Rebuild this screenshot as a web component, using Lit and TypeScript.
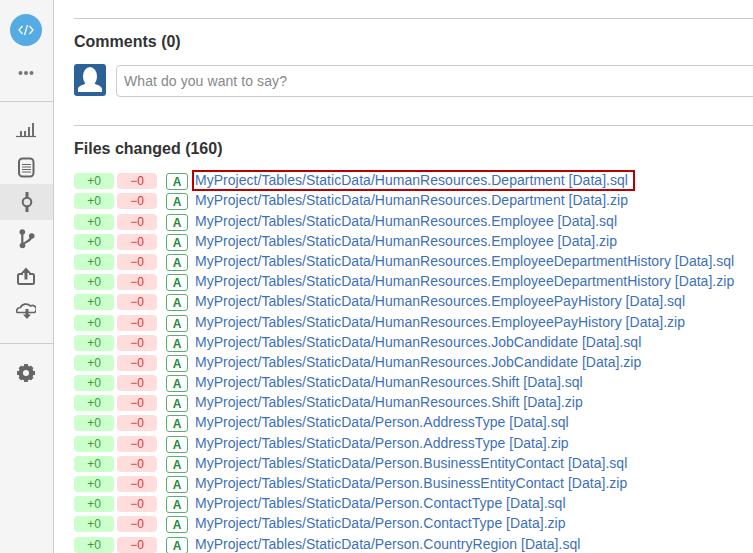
import { LitElement, html, css, svg } from "lit";
import { customElement } from "lit/decorators.js";

const files = [
  "HumanResources.Department [Data].sql",
  "HumanResources.Department [Data].zip",
  "HumanResources.Employee [Data].sql",
  "HumanResources.Employee [Data].zip",
  "HumanResources.EmployeeDepartmentHistory [Data].sql",
  "HumanResources.EmployeeDepartmentHistory [Data].zip",
  "HumanResources.EmployeePayHistory [Data].sql",
  "HumanResources.EmployeePayHistory [Data].zip",
  "HumanResources.JobCandidate [Data].sql",
  "HumanResources.JobCandidate [Data].zip",
  "HumanResources.Shift [Data].sql",
  "HumanResources.Shift [Data].zip",
  "Person.AddressType [Data].sql",
  "Person.AddressType [Data].zip",
  "Person.BusinessEntityContact [Data].sql",
  "Person.BusinessEntityContact [Data].zip",
  "Person.ContactType [Data].sql",
  "Person.ContactType [Data].zip",
  "Person.CountryRegion [Data].sql",
];

const icon = (w: number, h: number, body: unknown) =>
  html`<svg width=${w} height=${h} viewBox="0 0 ${w} ${h}" fill="none">${body}</svg>`;

@customElement("app-root")
export class AppRoot extends LitElement {
  static styles = css`
    :host { display: block; width: 753px; height: 553px; overflow: hidden; background: #fff; font-family: "Liberation Sans", Arial, sans-serif; }
    .page { display: flex; height: 553px; }
    .side { width: 53px; flex: none; background: #f5f5f5; border-right: 1px solid #ccc; display: flex; flex-direction: column; align-items: center; }
    .logo { width: 32px; height: 32px; border-radius: 50%; background: #55ace2; margin: 14px 1px 0 0; display: flex; align-items: center; justify-content: center; }
    .dots { height: 8px; margin: 23px 1px 0 0; display: flex; align-items: center; }
    .rule { align-self: stretch; height: 1px; background: #ccc; flex: none; }
    .r1 { margin-top: 24px; }
    .r2 { margin-top: 17px; }
    .nav { align-self: stretch; box-sizing: border-box; display: flex; align-items: center; justify-content: center; flex: none; padding-right: 1px; }
    .nav svg { display: block; }
    .nav.active { background: #e6e6e6; padding: 0; }
    .n-bars { height: 50px; padding-top: 6px; }
    .n-doc { height: 30px; }
    .n-commit { height: 36px; margin-top: 2px; }
    .n-branch { height: 37px; }
    .n-upload { height: 37px; }
    .n-cloud { height: 32px; }
    .n-gear { height: 58px; }
    .main { flex: 1; min-width: 0; padding: 18px 0 0 20px; overflow: hidden; }
    .hr { height: 1px; background: #ccc; }
    h2 { margin: 0; font-size: 16px; line-height: 18px; font-weight: 700; color: #333; }
    .comments { margin-top: 14px; }
    .say { display: flex; gap: 10px; margin-top: 13px; height: 32px; }
    .avatar { width: 32px; height: 32px; border-radius: 3px; background: #2d6299; flex: none; overflow: hidden; }
    .input { width: 660px; flex: none; height: 32px; box-sizing: border-box; margin-top: 1px; border: 1px solid #ccc; border-radius: 4px; padding: 0 7px; font-size: 14px; line-height: 31px; letter-spacing: .08px; color: #888; }
    .hr2 { margin-top: 29px; }
    .files { margin-top: 14px; }
    .list { margin-top: 13.2px; }
    .row { height: 20.2px; display: flex; font-size: 14px; white-space: nowrap; position: relative; }
    .add, .del { width: 40px; height: 16px; margin-top: 2px; border-radius: 4px; font-size: 12px; line-height: 16px; text-align: center; }
    .add { background: #ccffcc; color: #3c9a3c; }
    .del { background: #ffdddd; color: #dd3333; margin-left: 3px; }
    .a { width: 20px; height: 15px; margin: 2px 0 0 9px; border: 1px solid #5cad70; border-radius: 3px; font-size: 12px; font-weight: 700; line-height: 16px; text-align: center; color: #1f8a3c; flex: none; }
    .link { margin-left: 7px; line-height: 18px; letter-spacing: .03px; color: #3d70b8; text-decoration: none; }
    .mark { position: absolute; left: 118px; top: -1.2px; width: 439px; height: 17px; border: 2px solid #b80000; }
  `;

  render() {
    return html`<div class="page">
      <aside class="side">
        <div class="logo">${icon(16, 12, svg`<path d="M4.500 2 1 6l3.500 4M11.500 2 15 6l-3.500 4M9.500 1 6.500 11" stroke="#fff" stroke-width="1.2"/>`)}</div>
        <div class="dots">${icon(16, 6, svg`<circle cx="2.500" cy="3" r="2" fill="#777"/><circle cx="8" cy="3" r="2" fill="#777"/><circle cx="13.500" cy="3" r="2" fill="#777"/>`)}</div>
        <div class="rule r1"></div>
        <div class="nav n-bars">${icon(20, 16, svg`<path d="M0 14.500h20" stroke="#666" stroke-width="1.200"/><path d="M5 14V9M9 14V9M13 14V5M17 14V1" stroke="#707070" stroke-width="2"/>`)}</div>
        <div class="nav n-doc">${icon(18, 21, svg`<rect x="2" y="1.500" width="14.500" height="18" rx="3.500" stroke="#666" stroke-width="2"/><path d="M5 7.500h9M5 10h9M5 12.500h9M5 15h9" stroke="#666" stroke-width="1.200"/>`)}</div>
        <div class="nav n-commit active">${icon(12, 20, svg`<circle cx="6" cy="10" r="4.300" stroke="#666" stroke-width="2"/><path d="M6 0v5.500M6 14.500V20" stroke="#666" stroke-width="3"/>`)}</div>
        <div class="nav n-branch">${icon(18, 20, svg`<circle cx="5.300" cy="3" r="2.800" fill="#666"/><circle cx="5.500" cy="16.500" r="2.800" fill="#666"/><circle cx="14.700" cy="7" r="2.800" fill="#666"/><path d="M5.300 4v12.500M5.500 16c1.500-3 8.500-3.500 9.200-9" stroke="#666" stroke-width="2.200"/>`)}</div>
        <div class="nav n-upload">${icon(18, 18, svg`<path d="M6 7H2.500A1.500 1.500 0 0 0 1 8.500V15.500A1.500 1.500 0 0 0 2.500 17H15.500A1.500 1.500 0 0 0 17 15.500V8.500A1.500 1.500 0 0 0 15.500 7H12" stroke="#666" stroke-width="2"/><path d="M9 12.500V5" stroke="#666" stroke-width="3"/><path d="M4 6 9 .5 14 6z" fill="#666"/>`)}</div>
        <div class="nav n-cloud">${icon(20, 17, svg`<path d="M1 10.500a3.500 3.500 0 0 1 3.500-5 5.800 5 0 0 1 10-1.500 3.600 3.600 0 0 1 4 6.500z" stroke="#666" stroke-width="1.700" stroke-linejoin="round"/><path d="M11 7v6" stroke="#666" stroke-width="3"/><path d="M7 12.500h8L11 17z" fill="#666"/>`)}</div>
        <div class="rule r2"></div>
        <div class="nav n-gear">${icon(18, 18, svg`<circle cx="9" cy="9" r="5.300" stroke="#666" stroke-width="4.500"/><path d="M9 0v4M9 14v4M0 9h4M14 9h4M2.800 2.800l2.800 2.800M12.400 12.400l2.800 2.800M15.200 2.800l-2.800 2.800M5.600 12.400l-2.800 2.800" stroke="#666" stroke-width="3.800"/>`)}</div>
      </aside>
      <main class="main">
        <div class="hr"></div>
        <h2 class="comments">Comments (0)</h2>
        <div class="say">
          <div class="avatar">${icon(32, 32, svg`<ellipse cx="16" cy="12.500" rx="7" ry="9.500" fill="#fff"/><path d="M4 28v-3c0-2.500 3-3.500 7-5l2-1h6l2 1c4 1.500 7 2.500 7 5v3z" fill="#fff"/>`)}</div>
          <div class="input">What do you want to say?</div>
        </div>
        <div class="hr hr2"></div>
        <h2 class="files">Files changed (160)</h2>
        <div class="list">
          ${files.map(
            (f, i) => html`<div class="row">
              <div class="add">+0</div><div class="del">−0</div><div class="a">A</div>
              <a class="link">MyProject/Tables/StaticData/${f}</a>
              ${i === 0 ? html`<div class="mark"></div>` : ""}
            </div>`
          )}
        </div>
      </main>
    </div>`;
  }
}
